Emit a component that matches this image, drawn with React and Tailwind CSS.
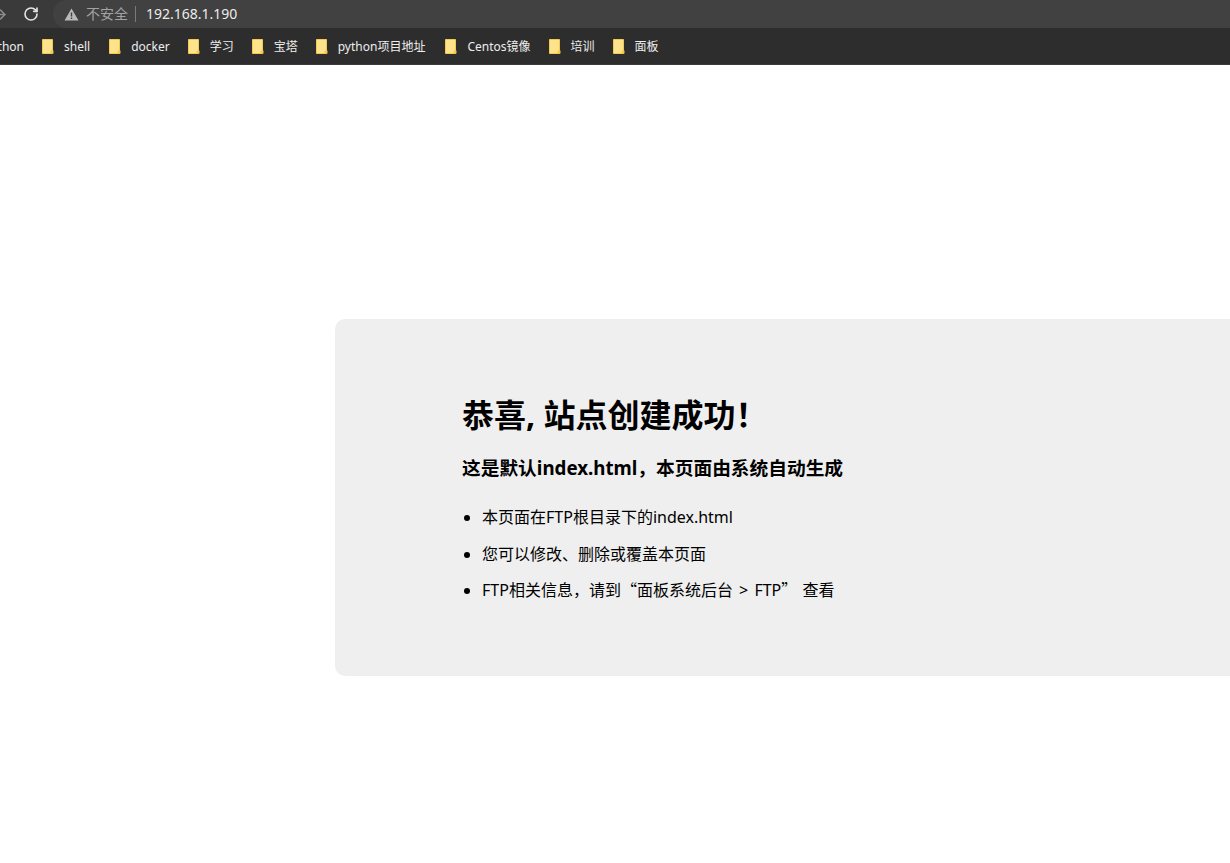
import React from "react";
import { ArrowRight, RotateCw } from "lucide-react";

const cjk = "font-['Noto_Sans','Noto_Sans_CJK_SC',sans-serif]";
const quote = "font-['Noto_Sans_CJK_SC',sans-serif]";

const bookmarks = [
    { name: "shell", gap: "mr-[19px]" },
    { name: "docker", gap: "mr-[18px]" },
    { name: "学习", gap: "mr-[18px]" },
    { name: "宝塔", gap: "mr-[18px]" },
    { name: "python项目地址", gap: "mr-[20px]" },
    { name: "Centos镜像", gap: "mr-[18px]" },
    { name: "培训", gap: "mr-[18px]" },
    { name: "面板", gap: "" },
];

function Folder() {
    return (
        <svg width="12" height="15" viewBox="0 0 12 15" className="mr-[10px] shrink-0">
            <path d="M0.5 0.5H10.5V14.5H0.5Z" fill="#fee38d" stroke="#f3c94f" />
            <path d="M8.5 11.5H11.5V14.5H8.5Z" fill="#f3c94f" />
        </svg>
    );
}

function App() {
    return (
        <div className={`w-[1230px] h-[863px] overflow-hidden bg-white ${cjk}`}>
            <div className="h-[28px] bg-[#3a3a3a] flex items-center">
                <ArrowRight size={15} strokeWidth={2.5} className="-ml-[7px] text-[#8a8a8a] shrink-0" />
                <RotateCw size={16} strokeWidth={2.4} className="ml-[15px] text-[#e4e4e4] shrink-0" />
                <div className="ml-[14px] h-[28px] flex-1 -mr-10 rounded-l-[14px] bg-[#414141] flex items-center pl-[11px]">
                    <svg width="15" height="13" viewBox="0 0 15 13" className="shrink-0">
                        <path fillRule="evenodd" fill="#b9b9b9" d="M7.5 0.5L14.5 12.5H0.5ZM6.8 4.5V8.5H8.2V4.5ZM6.8 9.5V11H8.2V9.5Z" />
                    </svg>
                    <span className="ml-[7px] text-[14px] text-[#a3a3a3] leading-none">不安全</span>
                    <span className="ml-[7px] w-px h-[16px] bg-[#7a7a7a]" />
                    <span className="ml-[10px] text-[14px] text-[#ececec] leading-none">192.168.1.190</span>
                </div>
            </div>
            <div className="h-[37px] bg-[#2d2d2d] border-b border-[#3a3a3a] flex items-center text-[12px] leading-[18px] text-[#eeeeee] whitespace-nowrap">
                <span className="-ml-[3px] mr-[18px] w-[27px] overflow-hidden flex justify-end pt-[2px]">thon</span>
                {bookmarks.map((b) => (
                    <div key={b.name} className={`flex items-center ${b.gap}`}>
                        <Folder />
                        <span className="pt-[2px]">{b.name}</span>
                    </div>
                ))}
            </div>
            <div className="ml-[335px] mt-[254px] w-[1000px] h-[357px] bg-[#efefef] rounded-[10px] pt-[75px] pl-[127px] text-black">
                <h1 className="text-[32px] font-bold leading-[42px]">恭喜, 站点创建成功！</h1>
                <h3 className="mt-[20px] text-[18.72px] font-bold leading-[24px]">这是默认index.html，本页面由系统自动生成</h3>
                <ul className="mt-[27px] list-disc pl-[20px] text-[16px] leading-[21px]">
                    <li className="mb-[16px]">本页面在FTP根目录下的index.html</li>
                    <li className="mb-[14px]">您可以修改、删除或覆盖本页面</li>
                    <li>FTP相关信息，请到<span className={quote}>“</span>面板系统后台 <span className="px-[2px]">&gt;</span> FTP<span className={quote}>”</span> <span className="pl-[1px]">查看</span></li>
                </ul>
            </div>
        </div>
    );
}

export default App;
